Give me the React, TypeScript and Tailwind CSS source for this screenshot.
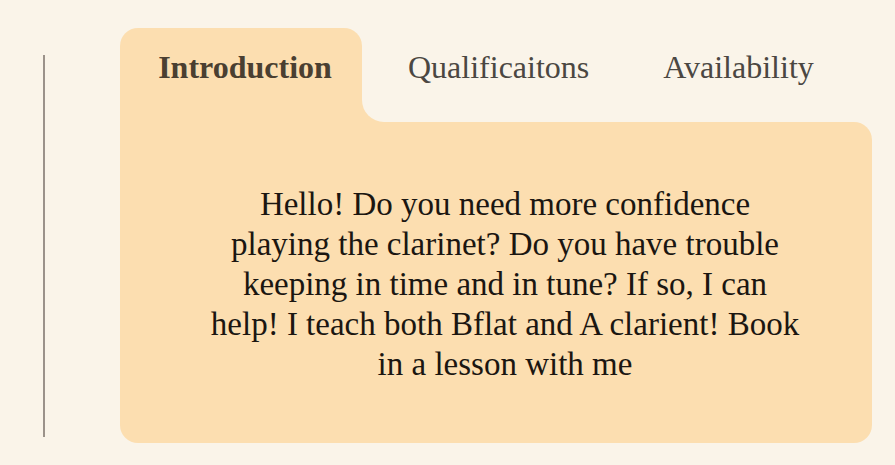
export default function App() {
  const tabs = ['Qualificaitons', 'Availability'];
  const lines = [
    'Hello! Do you need more confidence',
    'playing the clarinet? Do you have trouble',
    'keeping in time and in tune? If so, I can',
    'help! I teach both Bflat and A clarient! Book',
    'in a lesson with me',
  ];

  return (
    <div
      className="flex min-h-screen w-full bg-[#faf4e9]"
      style={{ fontFamily: '"Liberation Serif", "DejaVu Serif", serif' }}
    >
      <div className="ml-[43px] mt-[55px] h-[382px] w-[2px] bg-[#9b928a]" />

      <div className="ml-[75px] mt-[28px] flex w-[752px] flex-col">
        <div className="flex">
          <div className="flex h-[94px] w-[242px] items-center justify-center rounded-t-[18px] bg-[#fcdeb0] pb-[16px] pl-[8px] text-[32px] font-bold text-[#4a3f31]">
            Introduction
          </div>
          <div className="flex-1 bg-[#fcdeb0]">
            <div className="flex h-full items-center gap-[74px] rounded-bl-[22px] bg-[#faf4e9] pb-[16px] pl-[46px] text-[32px] text-[#4b4742]">
              {tabs.map((tab) => (
                <span key={tab}>{tab}</span>
              ))}
            </div>
          </div>
        </div>

        <div className="flex h-[321px] items-center justify-center rounded-b-[18px] rounded-tr-[18px] bg-[#fcdeb0] pl-[18px] pt-[3px]">
          <p className="text-center text-[33px] leading-[40px] text-[#1b1611]">
            {lines.map((line) => (
              <span key={line} className="block whitespace-nowrap">
                {line}
              </span>
            ))}
          </p>
        </div>
      </div>
    </div>
  );
}
